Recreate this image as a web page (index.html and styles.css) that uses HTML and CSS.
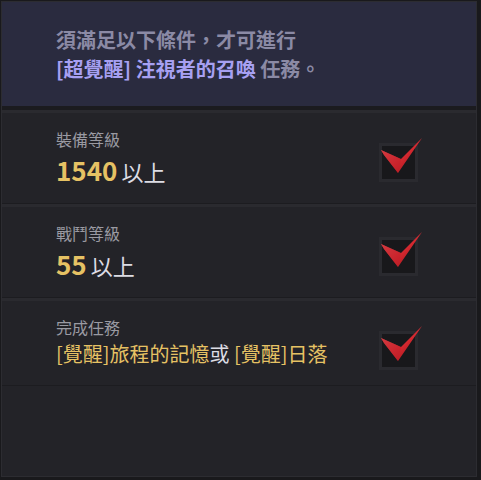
FILE: index.html
```html
<!DOCTYPE html>
<html lang="zh-Hant">
  <head>
    <meta charset="UTF-8">
    <meta name="viewport" content="width=device-width, initial-scale=1.0">
    <title>任務條件</title>
    <link rel="stylesheet" href="styles.css">
  </head>
  <body>
    <div class="panel">
      <div class="header">
        <p class="header-line">須滿足以下條件，才可進行</p>
        <p class="header-line"><span class="quest">[超覺醒] 注視者的召喚</span> 任務。</p>
      </div>
      <div class="row">
        <div class="cond">
          <div class="label">裝備等級</div>
          <div class="value"><span class="num">1540</span>以上</div>
        </div>
        <div class="check">
          <svg class="tick" viewBox="0 0 50 44" width="50" height="44"><defs><linearGradient id="g1" x1="0" y1="0" x2="1" y2="1"><stop offset="0" stop-color="#f06a6a"/><stop offset="0.55" stop-color="#d3282f"/><stop offset="1" stop-color="#8e0d14"/></linearGradient></defs><polygon points="2,15 22,24 43,3 19,38 5,20" fill="url(#g1)"/><polygon points="2,15 22,24 19,38 5,20" fill="#c0202a" opacity="0.5"/></svg>
        </div>
      </div>
      <div class="row">
        <div class="cond">
          <div class="label">戰鬥等級</div>
          <div class="value"><span class="num">55</span>以上</div>
        </div>
        <div class="check">
          <svg class="tick" viewBox="0 0 50 44" width="50" height="44"><defs><linearGradient id="g2" x1="0" y1="0" x2="1" y2="1"><stop offset="0" stop-color="#f06a6a"/><stop offset="0.55" stop-color="#d3282f"/><stop offset="1" stop-color="#8e0d14"/></linearGradient></defs><polygon points="2,15 22,24 43,3 19,38 5,20" fill="url(#g2)"/><polygon points="2,15 22,24 19,38 5,20" fill="#c0202a" opacity="0.5"/></svg>
        </div>
      </div>
      <div class="row">
        <div class="cond">
          <div class="label">完成任務</div>
          <div class="value value-quest"><span class="gold">[覺醒]旅程的記憶</span>或 <span class="gold">[覺醒]日落</span></div>
        </div>
        <div class="check">
          <svg class="tick" viewBox="0 0 50 44" width="50" height="44"><defs><linearGradient id="g3" x1="0" y1="0" x2="1" y2="1"><stop offset="0" stop-color="#f06a6a"/><stop offset="0.55" stop-color="#d3282f"/><stop offset="1" stop-color="#8e0d14"/></linearGradient></defs><polygon points="2,15 22,24 43,3 19,38 5,20" fill="url(#g3)"/><polygon points="2,15 22,24 19,38 5,20" fill="#c0202a" opacity="0.5"/></svg>
        </div>
      </div>
    </div>
  </body>
</html>
```

FILE: styles.css
```css
body {
  margin: 0;
  background: #19191c;
  font-family: 'Noto Sans CJK TC', 'Noto Sans', sans-serif;
}

.panel {
  margin: 1px;
  width: 476px;
  height: 476px;
  box-sizing: border-box;
  border: 1px solid #2c2c31;
  background: #232328;
}

.header {
  height: 108px;
  box-sizing: border-box;
  padding: 23px 54px 0;
  background: #2a2b3f;
  border-bottom: 4px solid #1b1b1f;
}

.header-line {
  margin: 0;
  font-size: 20px;
  line-height: 29px;
  font-weight: 700;
  color: #8b8aa5;
}

.quest {
  color: #a7a0f2;
}

.row {
  display: flex;
  justify-content: space-between;
  align-items: flex-start;
  padding: 0 58px 0 54px;
  border-top: 3px solid #2a2a2f;
  border-bottom: 1px solid #1c1c20;
}

.cond {
  padding: 16px 0 15px;
}

.label {
  font-size: 16px;
  line-height: 20px;
  color: #9a9aa2;
}

.value {
  margin-top: 4px;
  font-size: 22px;
  line-height: 34px;
  color: #dcdce4;
}

.value-quest {
  font-size: 20px;
  line-height: 32px;
  margin-top: 1px;
}

.num {
  margin-right: 4px;
  font-size: 26px;
  font-weight: 700;
  color: #e6c264;
}

.gold {
  color: #e6c264;
}

.check {
  position: relative;
  margin-top: 30px;
  width: 33px;
  height: 33px;
  border: 3px solid #2a2a2f;
  background: #18181b;
}

.tick {
  position: absolute;
  left: -3px;
  top: -11px;
  overflow: visible;
}
```
